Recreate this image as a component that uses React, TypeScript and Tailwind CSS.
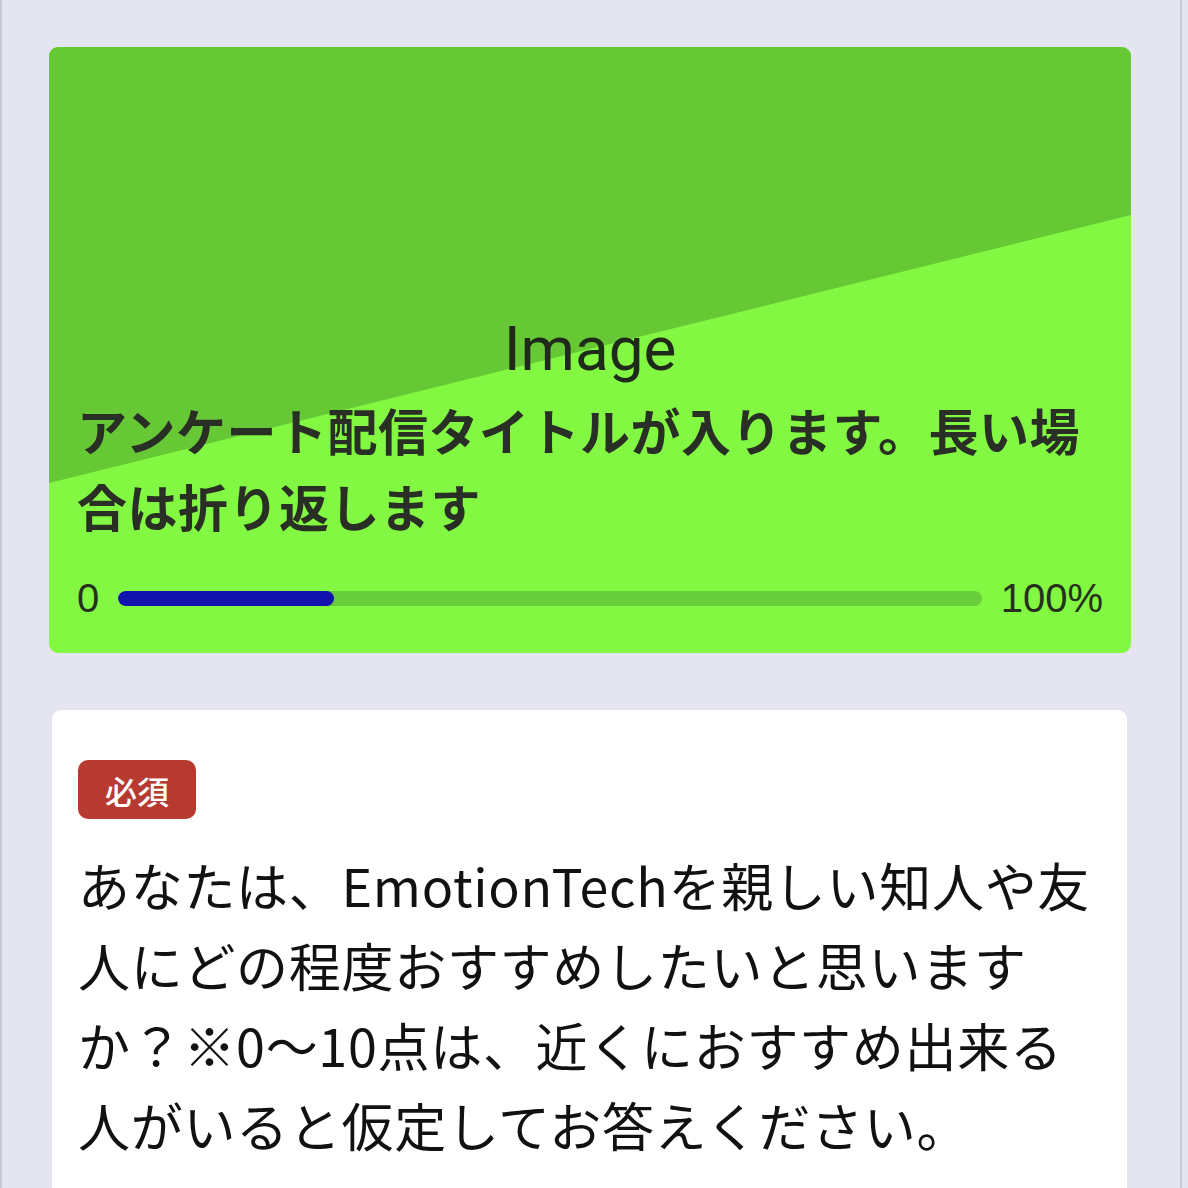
import React from 'react';

const progress = 25;

function HeroCard() {
  return (
    <div className="relative ml-[47px] mt-[47px] w-[1082px] h-[606px] rounded-[9px] overflow-hidden bg-[#83f842]">
      {/* placeholder image: two-tone diagonal */}
      <svg
        className="absolute inset-0 w-full h-full"
        viewBox="0 0 1082 606"
        preserveAspectRatio="none"
      >
        <polygon points="0,0 1082,0 1082,168 0,436" fill="#67c836" />
      </svg>

      <div className="relative flex flex-col h-full px-[28px] pt-[272px] pb-[35px]">
        <p className="text-center text-[62px] leading-[60px] text-[#1f2a1a] font-['Roboto','Liberation_Sans',sans-serif]">
          Image
        </p>
        <h1 className="mt-[12px] text-[50px] tracking-[0.5px] leading-[76px] font-bold text-[#2a2f26] font-['Noto_Sans_CJK_JP','Noto_Sans',sans-serif]">
          アンケート配信タイトルが入ります。長い場合は折り返します
        </h1>

        <div className="mt-auto flex items-center gap-[19px] text-[40px] leading-none text-[#26301f] font-['Liberation_Sans',sans-serif]">
          <span>0</span>
          <div className="flex-1 h-[15px] rounded-full bg-[#68cd3d] overflow-hidden">
            <div className="h-full rounded-full bg-[#1212ae]" style={{ width: `${progress}%` }} />
          </div>
          <span>100%</span>
        </div>
      </div>
    </div>
  );
}

function QuestionCard() {
  return (
    <div className="ml-[50px] mt-[57px] w-[1075px] rounded-t-[9px] bg-white px-[26px] pt-[50px] pb-[40px]">
      <span className="inline-flex items-center justify-center w-[118px] h-[59px] rounded-[10px] bg-[#b73a31] text-white text-[32px] font-medium font-['Noto_Sans_CJK_JP',sans-serif]">
        必須
      </span>
      <p className="mt-[26px] pr-[10px] text-[52px] tracking-[0.7px] leading-[80px] text-[#111111] font-['Noto_Sans_CJK_JP','Noto_Sans',sans-serif]">
        あなたは、EmotionTechを親しい知人や友人にどの程度おすすめしたいと思いますか？※0〜10点は、近くにおすすめ出来る人がいると仮定してお答えください。
      </p>
    </div>
  );
}

export default function App() {
  return (
    <div className="min-h-screen bg-[#e4e5f0] overflow-hidden">
      <div className="w-[1182px] h-[1188px] border-l-2 border-r-2 border-[#c8c8d3] overflow-hidden">
        <HeroCard />
        <QuestionCard />
      </div>
    </div>
  );
}
